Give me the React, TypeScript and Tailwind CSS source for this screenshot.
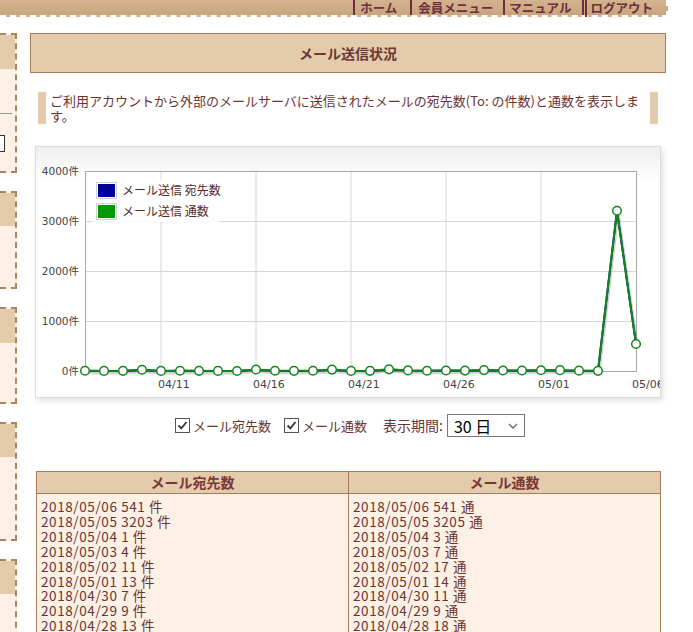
import React from "react";

const JP = { fontFamily: '"Noto Sans CJK JP", sans-serif' };

// 04/07 .. 05/06
const tsuu = [5, 2, 3, 25, 2, 4, 3, 2, 1, 30, 4, 3, 6, 28, 2, 3, 33, 12, 6, 10, 8, 18, 9, 11, 14, 17, 7, 3, 3205, 541];
const atesaki = [4, 1, 2, 22, 1, 3, 2, 1, 0, 27, 3, 2, 5, 25, 1, 2, 30, 10, 5, 8, 6, 13, 9, 7, 13, 11, 4, 1, 3203, 541];

const rows = [
  ["2018/05/06", "541", "541"],
  ["2018/05/05", "3203", "3205"],
  ["2018/05/04", "1", "3"],
  ["2018/05/03", "4", "7"],
  ["2018/05/02", "11", "17"],
  ["2018/05/01", "13", "14"],
  ["2018/04/30", "7", "11"],
  ["2018/04/29", "9", "9"],
  ["2018/04/28", "13", "18"],
  ["2018/04/27", "6", "8"],
  ["2018/04/26", "8", "10"],
];

const sideBoxes = [
  { h: 140, head: 36, extra: true },
  { h: 98, head: 35 },
  { h: 97, head: 36 },
  { h: 119, head: 35 },
  { h: 100, head: 35 },
];

function Chart() {
  const PL = 49, PT = 24, PR = 600, PB = 224, STEP = 19;
  const y = (v: number) => PB - v * 0.05;
  const pts = (d: number[]) => d.map((v, i) => `${PL + i * STEP},${y(v)}`).join(" ");
  const vGrid = [4, 9, 14, 19, 24];
  const xLabels = ["04/11", "04/16", "04/21", "04/26", "05/01"];
  const axisFont = '"DejaVu Sans", "Noto Sans CJK JP", sans-serif';

  return (
    <svg width="624" height="250" className="block">
      <rect x={PL} y={PT} width={PR - PL} height={PB - PT} fill="#fff" />
      {vGrid.map((i) => (
        <line key={i} x1={PL + i * STEP} x2={PL + i * STEP} y1={PT} y2={PB} stroke="#d6d6d6" />
      ))}
      {[74, 124, 174].map((g) => (
        <line key={g} x1={PL} x2={PR} y1={g + 0.5} y2={g + 0.5} stroke="#d6d6d6" />
      ))}
      <rect x={PL + 0.5} y={PT + 0.5} width={PR - PL} height={PB - PT} fill="none" stroke="#a8a8a8" />

      {/* y labels */}
      {["4000件", "3000件", "2000件", "1000件", "0件"].map((t, i) => (
        <text key={t} x={43} y={PT + i * 50 + 4} textAnchor="end" fontSize="10.5" fill="#444" fontFamily={axisFont}>
          {t}
        </text>
      ))}
      {/* x labels */}
      {xLabels.map((t, k) => (
        <text key={t} x={PL + vGrid[k] * STEP - 3} y={241} fontSize="11" fill="#444" fontFamily={axisFont}>
          {t}
        </text>
      ))}
      <text x={PR - 4} y={241} fontSize="11" fill="#444" fontFamily={axisFont}>05/06</text>

      {/* lines */}
      <polyline points={pts(tsuu)} fill="none" stroke="rgba(0,0,0,0.18)" strokeWidth="3" transform="translate(1,2)" />
      <polyline points={pts(atesaki)} fill="none" stroke="#000099" strokeWidth="2" />
      <polyline points={pts(tsuu)} fill="none" stroke="#12861a" strokeWidth="2" />
      {tsuu.map((v, i) => (
        <circle key={i} cx={PL + i * STEP} cy={y(v)} r="4.3" fill="#fff" stroke="#12861a" strokeWidth="1.5" />
      ))}

      {/* legend */}
      <rect x="56" y="33" width="128" height="42" fill="#fff" fillOpacity="0.85" />
      <rect x="60.5" y="35.5" width="20" height="16" fill="#fff" stroke="#cfcfcf" />
      <rect x="62" y="37" width="17" height="13" fill="#000099" />
      <rect x="60.5" y="56.5" width="20" height="16" fill="#fff" stroke="#cfcfcf" />
      <rect x="62" y="58" width="17" height="13" fill="#009900" />
      <text x="86" y="48" fontSize="12" fill="#5a2a2a" fontFamily='"Noto Sans CJK JP", sans-serif'>メール送信 宛先数</text>
      <text x="86" y="69" fontSize="12" fill="#5a2a2a" fontFamily='"Noto Sans CJK JP", sans-serif'>メール送信 通数</text>
    </svg>
  );
}

function Check({ label }: { label: string }) {
  return (
    <span className="flex items-center gap-[3px]">
      <span className="w-[15px] h-[15px] border-[1.5px] border-[#555] bg-white flex items-center justify-center">
        <svg width="11" height="11" viewBox="0 0 11 11">
          <path d="M1.5 5.5 L4.3 8.3 L9.5 2" fill="none" stroke="#333" strokeWidth="1.8" />
        </svg>
      </span>
      <span>{label}</span>
    </span>
  );
}

export default function App() {
  return (
    <div className="bg-white w-[693px] min-h-[632px] overflow-hidden text-[#6b3333]" style={JP}>
      {/* HEADER */}
      <div className="w-[668px] h-[17px] bg-linear-to-b from-[#d4b390] to-[#c9a57e] border-b-2 border-r-2 border-dashed border-white flex justify-end items-center pr-[13px] text-[12.5px] font-bold leading-[15px] text-[#6e2f3c]">
        <span className="border-l-2 border-[#6e2f3c] pl-[5px]">ホーム</span>
        <span className="border-l-2 border-[#6e2f3c] pl-[6px] ml-[13px]">会員メニュー</span>
        <span className="border-l-2 border-[#6e2f3c] pl-[4px] ml-[10px]">マニュアル</span>
        <span className="border-l-2 border-[#6e2f3c] ml-[11px] pl-[1px]">
          <span className="border-l-2 border-[#6e2f3c] pl-[3px]">ログアウト</span>
        </span>
      </div>

      <div className="flex pt-[16px]">
        {/* SIDEBAR */}
        <div className="w-[17px] shrink-0 flex flex-col gap-[18px]">
          {sideBoxes.map((b, i) => (
            <div
              key={i}
              className="border-y-2 border-r-2 border-dashed border-[#aa8560] bg-[#fdf1e5] flex flex-col"
              style={{ height: b.h }}
            >
              <div className="bg-[#e3cbab]" style={{ height: b.head - 2 }} />
              {b.extra && (
                <div className="flex flex-col">
                  <div className="h-[1px] w-[12px] bg-[#999] mt-[44px]" />
                  <div className="w-[5px] h-[17px] border border-[#333] border-l-0 mt-[21px] bg-white" />
                </div>
              )}
            </div>
          ))}
        </div>

        {/* MAIN */}
        <div className="ml-[13px] w-[636px] shrink-0">
          <div className="h-[40px] border border-[#a67e5d] bg-[#e3cbab] flex items-center justify-center text-[14px] font-bold text-[#6e3838]">
            メール送信状況
          </div>

          <div className="mt-[19px] mx-[8px] border-x-[8px] border-[#e3cbab] pl-[4px] text-[13px] leading-[15px] py-[1px]">
            ご利用アカウントから外部のメールサーバに送信されたメールの宛先数(To: の件数)と通数を表示します。
          </div>

          <div className="mt-[22px] ml-[5px] w-[626px] h-[252px] border border-[#dcdcdc] bg-linear-to-b from-[#efefef] to-white to-[14%] shadow-[2px_3px_6px_rgba(0,0,0,0.12)]">
            <Chart />
          </div>

          <div className="mt-[16px] flex items-center pl-[145px] text-[13px]">
            <Check label="メール宛先数" />
            <span className="ml-[13px]">
              <Check label="メール通数" />
            </span>
            <span className="ml-[16px] text-[14px]">表示期間:</span>
            <span className="ml-[4px] w-[78px] h-[23px] border border-[#777] bg-white flex items-center justify-between pl-[6px] pr-[6px] text-[16px] text-black">
              30 日
              <svg width="10" height="6" viewBox="0 0 10 6">
                <path d="M1 1 L5 5 L9 1" fill="none" stroke="#666" strokeWidth="1.3" />
              </svg>
            </span>
          </div>

          <div className="mt-[34px] ml-[6px] w-[625px] border border-[#a67e5d]">
            <div className="grid grid-cols-[312px_1fr] bg-[#e3cbab] h-[22px] border-b border-[#a67e5d] font-bold text-[14px] text-[#7a3838]">
              <div className="flex items-center justify-center border-r border-[#a67e5d]">メール宛先数</div>
              <div className="flex items-center justify-center">メール通数</div>
            </div>
            <div className="grid grid-cols-[312px_1fr] bg-[#fdf1e5] text-[13.5px] leading-[14.9px] tracking-[0.6px]">
              <div className="border-r border-[#a67e5d] pl-[4px] pt-[5px] pb-[6px]">
                {rows.map((r) => (
                  <div key={r[0]} className="whitespace-pre">{`${r[0]} ${r[1]} 件`}</div>
                ))}
              </div>
              <div className="pl-[4px] pt-[5px] pb-[6px]">
                {rows.map((r) => (
                  <div key={r[0]} className="whitespace-pre">{`${r[0]} ${r[2]} 通`}</div>
                ))}
              </div>
            </div>
          </div>
        </div>
      </div>
    </div>
  );
}
